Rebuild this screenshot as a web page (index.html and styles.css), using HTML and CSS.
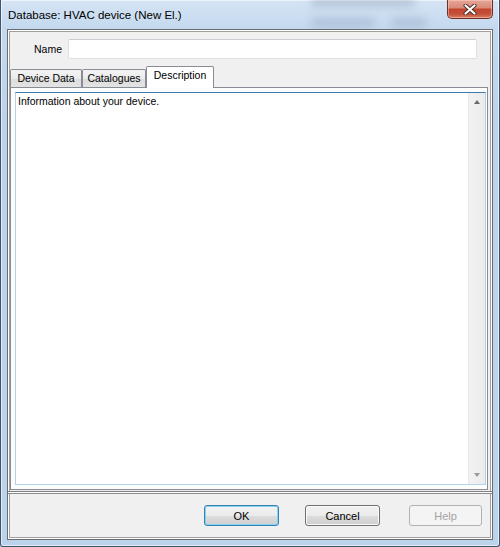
FILE: index.html
```html
<!DOCTYPE html>
<html>
<head>
<meta charset="utf-8">
<title>Database: HVAC device (New El.)</title>
<link rel="stylesheet" href="styles.css">
</head>
<body>
<div class="window">
  <div class="titlebar">
    <div class="blur blur-a"></div>
    <div class="blur blur-b"></div>
    <div class="blur blur-c"></div>
    <span class="title">Database: HVAC device (New El.)</span>
    <div class="close">
      <svg width="14" height="11" viewBox="0 0 14 11">
        <path d="M2.5 1.5 L11.5 9.5 M11.5 1.5 L2.5 9.5" stroke="#4a2a26" stroke-width="4" stroke-linecap="round" fill="none"/>
        <path d="M2.5 1.5 L11.5 9.5 M11.5 1.5 L2.5 9.5" stroke="#ffffff" stroke-width="2.2" stroke-linecap="round" fill="none"/>
      </svg>
    </div>
  </div>
  <div class="client">
    <div class="main">
      <div class="name-row">
        <label class="name-label">Name</label>
        <div class="input"></div>
      </div>
      <div class="tabs">
        <div class="tab tab-device">Device Data</div>
        <div class="tab tab-cat">Catalogues</div>
        <div class="tab tab-desc active">Description</div>
      </div>
      <div class="tab-panel">
        <div class="textarea">
          <div class="text">Information about your device.</div>
          <div class="scrollbar">
            <span class="arrow up"></span>
            <span class="arrow down"></span>
          </div>
        </div>
      </div>
    </div>
    <div class="separator"></div>
    <div class="buttons">
      <button class="btn btn-default">OK</button>
      <button class="btn btn-cancel">Cancel</button>
      <button class="btn btn-help" disabled>Help</button>
    </div>
  </div>
</div>
</body>
</html>
```
FILE: styles.css
```css
html, body {
  margin: 0;
  padding: 0;
  width: 500px;
  height: 547px;
  overflow: hidden;
  background: #bcd3ec;
}

.window {
  box-sizing: border-box;
  width: 500px;
  height: 547px;
  display: flex;
  flex-direction: column;
  border: 1px solid #44556b;
  border-top: 0;
  border-radius: 0 0 3px 3px;
  background: linear-gradient(180deg, #d5e4f4 0px, #c4d9ef 28px, #bcd3ec 120px, #bcd3ec 100%);
  box-shadow: inset 0 0 0 1px rgba(255, 255, 255, 0.55);
  font-family: "Liberation Sans", Arial, sans-serif;
  color: #000;
}

/* ---------- title bar ---------- */
.titlebar {
  position: relative;
  height: 29px;
  flex: 0 0 29px;
  display: flex;
  justify-content: space-between;
  align-items: flex-start;
  padding-left: 7px;
  overflow: hidden;
}

.title {
  position: relative;
  z-index: 1;
  margin-top: 8px;
  font-size: 11.5px;
  line-height: 14px;
  color: #000;
  white-space: nowrap;
}

.blur {
  position: absolute;
  background: rgba(80, 100, 130, 0.22);
  filter: blur(4px);
  border-radius: 4px;
}
.blur-a { left: 310px; top: -4px; width: 104px; height: 11px; }
.blur-b { left: 310px; top: 18px; width: 64px; height: 9px; }
.blur-c { left: 390px; top: 18px; width: 36px; height: 9px; }

.close {
  position: relative;
  z-index: 1;
  box-sizing: border-box;
  width: 46px;
  height: 19px;
  margin-right: 6px;
  display: flex;
  align-items: center;
  justify-content: center;
  border: 1px solid #6e2e25;
  border-top: 0;
  border-radius: 0 0 5px 5px;
  background: linear-gradient(180deg, #e6a595 0%, #d98c7a 42%, #c2462f 52%, #c4503a 78%, #dc7c62 100%);
  box-shadow: inset 0 0 0 1px rgba(255, 220, 210, 0.45);
}
.close svg { display: block; margin-top: 1px; }

/* ---------- client area ---------- */
.client {
  flex: 1;
  margin: 0 6px 6px 6px;
  display: flex;
  flex-direction: column;
  background: #f0f0f0;
  border: 1px solid #6b6b6b;
  box-shadow: inset 0 0 0 1px #ffffff, inset 0 0 0 2px #a0a0a0;
}

.main {
  flex: 1;
  display: flex;
  flex-direction: column;
  padding: 9px 4px 1px 2px;
  min-height: 0;
}

.name-row {
  display: flex;
  align-items: center;
  height: 20px;
}

.name-label {
  width: 52px;
  text-align: right;
  font-size: 10.5px;
  margin-right: 6px;
}

.input {
  box-sizing: border-box;
  width: 409px;
  height: 20px;
  background: #fff;
  border: 1px solid #dcdfe5;
  border-top-color: #c9ccd3;
  border-radius: 2px;
}

/* ---------- tabs ---------- */
.tabs {
  display: flex;
  align-items: flex-end;
  height: 21px;
  margin-top: 7px;
  position: relative;
  z-index: 1;
}

.tab {
  box-sizing: border-box;
  height: 18px;
  border: 1px solid #898c95;
  border-bottom: 0;
  border-radius: 2px 2px 0 0;
  background: linear-gradient(180deg, #f3f3f3 0%, #ebebeb 50%, #dddddd 51%, #e3e3e3 100%);
  font-size: 10.5px;
  line-height: 16px;
  text-align: center;
  white-space: nowrap;
}
.tab-device { width: 72px; }
.tab-cat { width: 64px; }
.tab-desc { width: 68px; }

.tab.active {
  height: 22px;
  margin-bottom: -1px;
  background: #ffffff;
  line-height: 16px;
}

.tab-panel {
  flex: 1;
  display: flex;
  border: 1px solid #898c95;
  background: #fcfcfc;
  padding: 4px 1px 4px 4px;
  min-height: 0;
}

.textarea {
  flex: 1;
  display: flex;
  background: #ffffff;
  border: 1px solid #b5cfe7;
  border-top-color: #3d7bad;
  border-bottom-color: #b7d5ea;
}

.text {
  flex: 1;
  padding: 2px 0 0 2px;
  font-size: 10.5px;
  line-height: 13px;
}

.scrollbar {
  width: 17px;
  display: flex;
  flex-direction: column;
  justify-content: space-between;
  align-items: center;
  background: linear-gradient(90deg, #dcdcdc 0px, #f2f2f2 1px, #ebebeb 100%);
  padding: 7px 0 7px 0;
}

.arrow {
  width: 0;
  height: 0;
  border-left: 3.5px solid transparent;
  border-right: 3.5px solid transparent;
  margin-left: 1px;
}
.arrow.up { border-bottom: 4px solid #6a6a6a; }
.arrow.down { border-top: 4px solid #9a9a9a; }

/* ---------- bottom ---------- */
.separator {
  height: 3px;
  flex: 0 0 3px;
  box-sizing: border-box;
  border-top: 1px solid #7f7f7f;
  border-bottom: 1px solid #8c8c8c;
  background: #ffffff;
}

.buttons {
  flex: 0 0 45px;
  display: flex;
  justify-content: flex-end;
  align-items: flex-start;
  padding: 11px 10px 0 0;
  box-sizing: border-box;
}

.btn {
  box-sizing: border-box;
  width: 75px;
  height: 21px;
  padding: 0;
  border: 1px solid #707070;
  border-radius: 3px;
  background: linear-gradient(180deg, #f2f2f2 0%, #ebebeb 50%, #dddddd 51%, #cfcfcf 100%);
  box-shadow: inset 0 0 0 1px #fbfbfb;
  font-family: "Liberation Sans", Arial, sans-serif;
  font-size: 11px;
  color: #000;
}

.btn-default {
  border-color: #3c7fb1;
  box-shadow: inset 0 0 0 1px #7fd3f5;
}

.btn-cancel { margin-left: 26px; }

.btn-help {
  width: 73px;
  margin-left: 29px;
  border-color: #adb2b5;
  background: #f4f4f4;
  box-shadow: none;
  color: #a3a3a3;
}
```
